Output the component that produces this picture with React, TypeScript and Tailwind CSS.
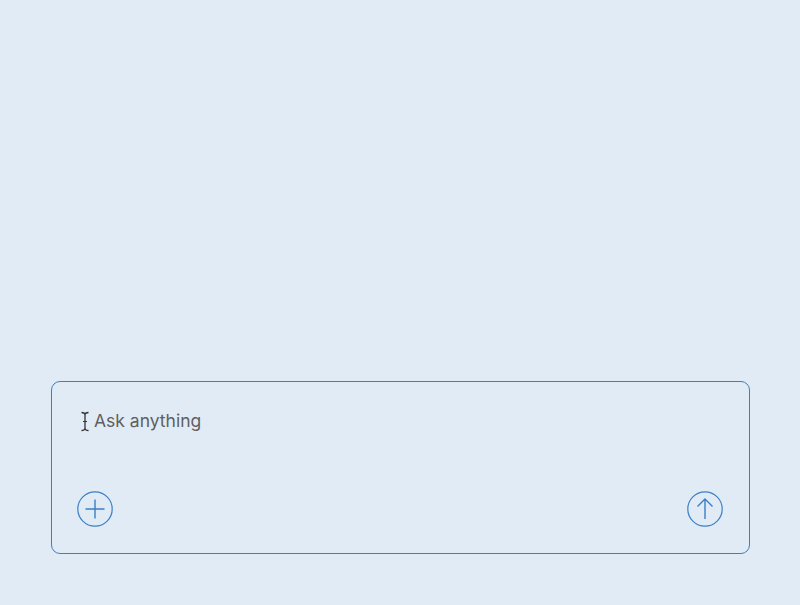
import { useState } from "react";

const App = () => {
  const [text, setText] = useState("");

  return (
    <div className="flex h-[605px] w-full flex-col justify-end bg-[#e1ebf6] pl-[51px] pr-[50px] pb-[51px]">
      <div className="flex h-[173px] flex-col justify-between rounded-[9px] border border-[#3b80c4] px-[26px] pt-[26px] pb-[26px]">
        <div className="flex items-center gap-[4px] pl-[2px]">
          <svg width="10" height="21" viewBox="0 0 10 21" className="shrink-0">
            <path d="M1.5 1.5 Q5 1.5 5 4 L5 17 Q5 19.5 1.5 19.5 M8.5 1.5 Q5 1.5 5 4 M5 17 Q5 19.5 8.5 19.5" fill="none" stroke="#333" strokeWidth="1.3" />
            <path d="M3 10.5 L7 10.5" stroke="#333" strokeWidth="1" />
          </svg>
          <input
            value={text}
            onChange={(e) => setText(e.target.value)}
            placeholder="Ask anything"
            className="w-full bg-transparent font-['Inter',sans-serif] text-[17.5px] text-[#555] outline-none placeholder:text-[#5f5f5f]"
          />
        </div>
        <div className="flex items-center justify-between">
          <button className="-ml-px flex h-9 w-9 items-center justify-center">
            <svg width="36" height="36" viewBox="0 0 36 36">
              <circle cx="18" cy="18" r="17.2" fill="none" stroke="#3b80c4" strokeWidth="1.2" />
              <path d="M18 8.5 V27.5 M8.5 18 H27.5" stroke="#3b80c4" strokeWidth="1.4" />
            </svg>
          </button>
          <button className="flex h-9 w-9 items-center justify-center">
            <svg width="36" height="36" viewBox="0 0 36 36">
              <circle cx="18" cy="18" r="17.2" fill="none" stroke="#3b80c4" strokeWidth="1.2" />
              <path d="M18 8 V28 M10.5 15.5 L18 8 L25.5 15.5" fill="none" stroke="#3b80c4" strokeWidth="1.4" />
            </svg>
          </button>
        </div>
      </div>
    </div>
  );
};

export default App;
